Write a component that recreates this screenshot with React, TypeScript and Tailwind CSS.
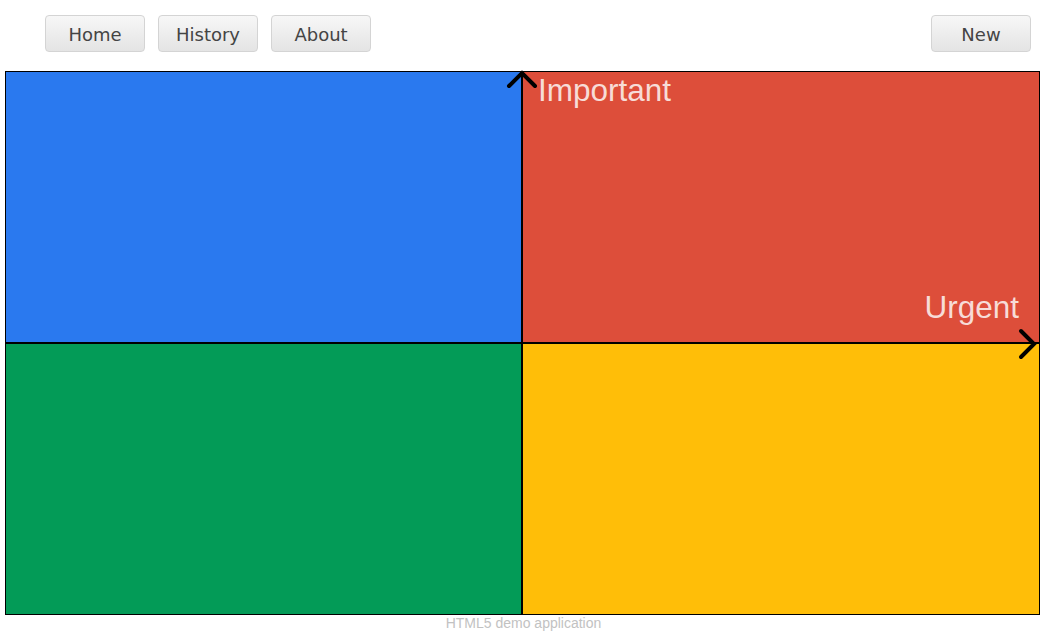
import React from "react";

function NavButton({ label }: { label: string }) {
  return (
    <button
      className="h-[37px] w-[100px] rounded-[4px] border border-[#d4d4d4] bg-gradient-to-b from-[#f7f7f7] to-[#e4e4e4] pt-[2px] text-[18px] text-[#444] [font-family:'DejaVu_Sans',Verdana,sans-serif] leading-none"
    >
      {label}
    </button>
  );
}

export default function App() {
  return (
    <div className="w-[1047px] h-[634px] bg-white overflow-hidden [font-family:'Liberation_Sans',Arial,sans-serif]">
      <div className="flex items-start justify-between pl-[45px] pr-[16px] pt-[15px] h-[71px]">
        <div className="flex gap-[13px]">
          <NavButton label="Home" />
          <NavButton label="History" />
          <NavButton label="About" />
        </div>
        <NavButton label="New" />
      </div>
      <div className="ml-[5px] w-[1035px] h-[544px] border border-black bg-black relative">
        <div className="grid grid-cols-[515px_1fr] grid-rows-2 gap-[2px] w-full h-full">
          <div className="bg-[#2a79ef]" />
          <div className="bg-[#dd4e3a] relative">
            <span className="absolute left-[15px] top-[0px] text-[31.5px] leading-[36px] text-[#f7dcd7]">
              Important
            </span>
            <span className="absolute right-[20px] bottom-[17px] text-[31.5px] leading-[36px] text-[#f7dcd7]">
              Urgent
            </span>
          </div>
          <div className="bg-[#039b57]" />
          <div className="bg-[#ffbe08]" />
        </div>
        <svg
          className="absolute left-[500px] top-[-2px]"
          width="32"
          height="22"
          viewBox="0 0 32 22"
        >
          <polyline
            points="3,16 16,3 29,16"
            fill="none"
            stroke="black"
            strokeWidth="4"
            strokeLinecap="round"
            strokeLinejoin="miter"
          />
        </svg>
        <svg
          className="absolute left-[1008px] top-[256px]"
          width="26"
          height="32"
          viewBox="0 0 26 32"
        >
          <polyline
            points="7,3 20,16 7,29"
            fill="none"
            stroke="black"
            strokeWidth="4"
            strokeLinecap="round"
            strokeLinejoin="miter"
          />
        </svg>
      </div>
      <div className="text-center text-[14px] leading-[16px] text-[#c2c2c2]">
        HTML5 demo application
      </div>
    </div>
  );
}
